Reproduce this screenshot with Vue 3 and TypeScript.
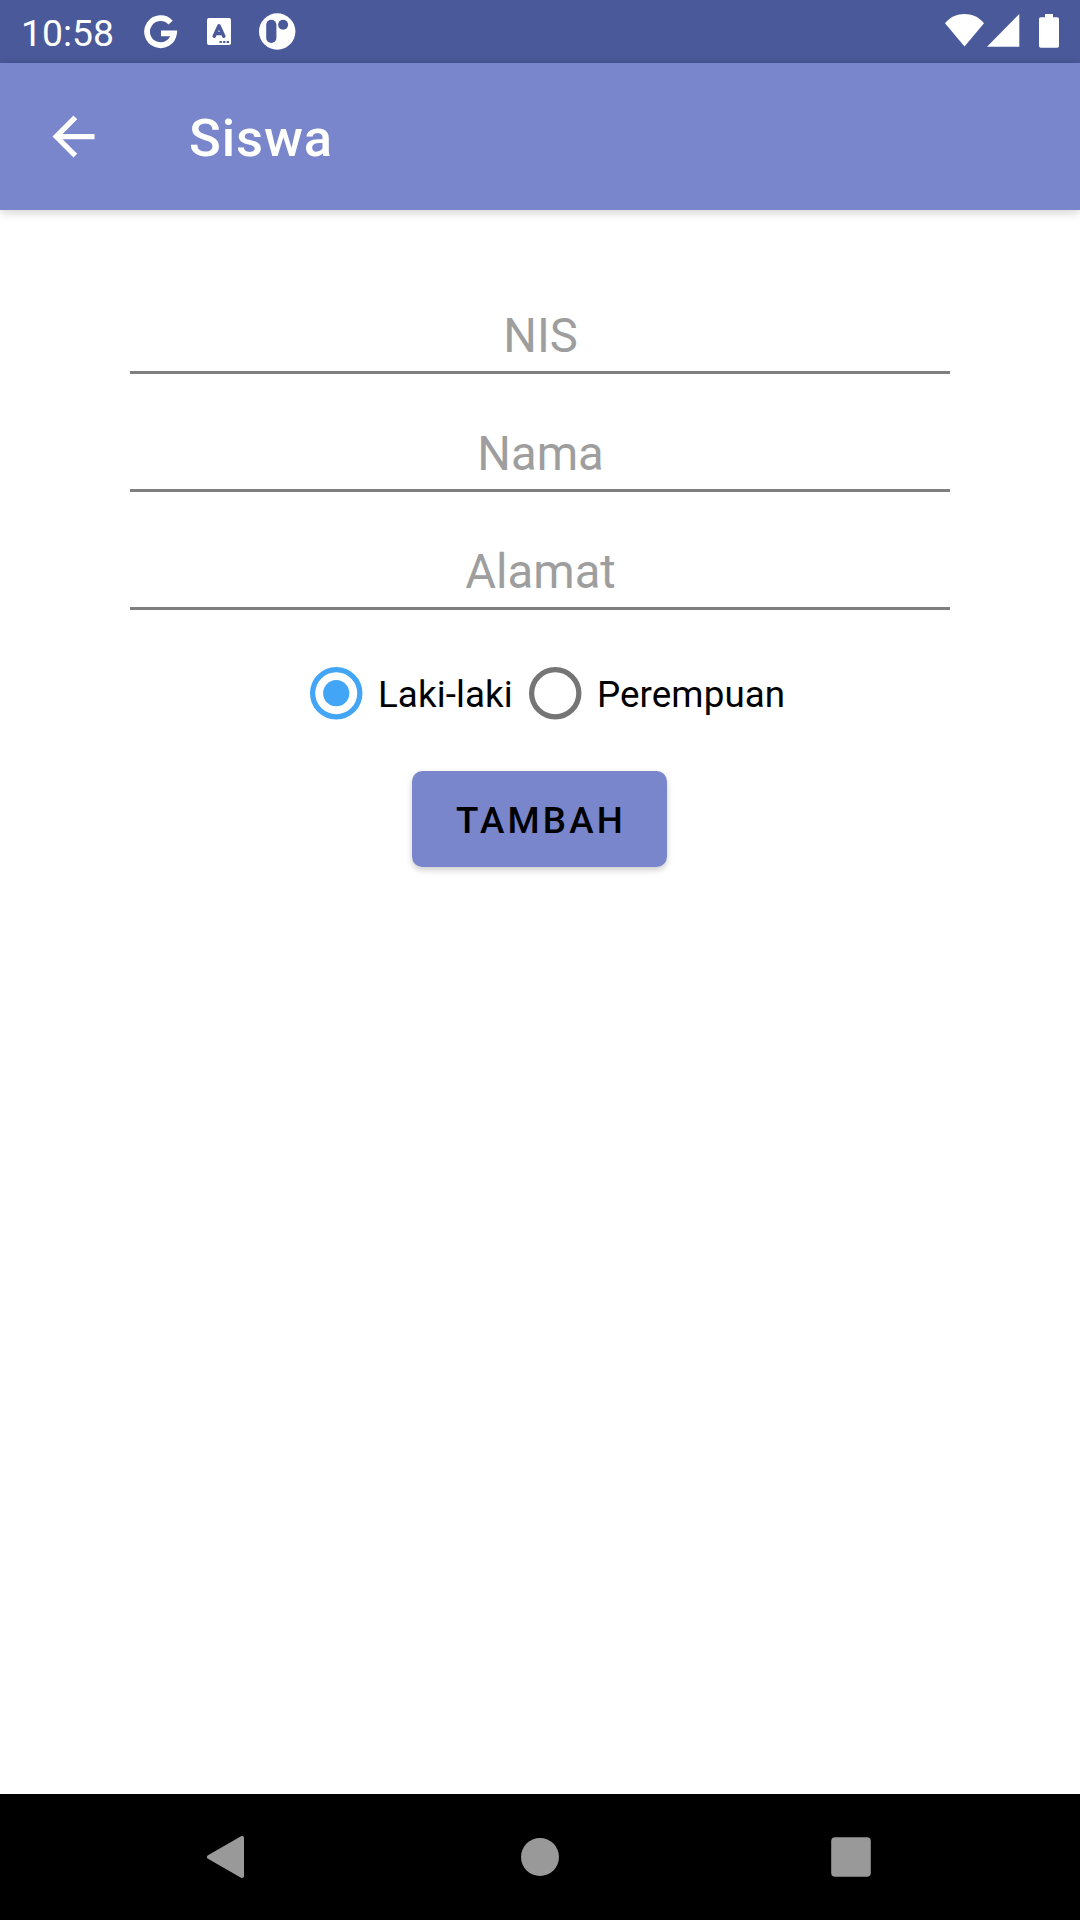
<script setup lang="ts">
import { ref } from 'vue'

const fields: string[] = ['NIS', 'Nama', 'Alamat']
const genders: string[] = ['Laki-laki', 'Perempuan']
const selected = ref<string>('Laki-laki')
</script>

<template>
  <div class="screen">
    <div class="status">
      <span class="clock">10:58</span>
      <svg class="google" width="34" height="34" viewBox="0 0 34 34">
        <path d="M26.6 7.6A13.5 13.5 0 1 0 30 18.3H17" fill="none" stroke="#fff" stroke-width="5.8" />
      </svg>
      <svg class="letter" width="24" height="27" viewBox="0 0 24 27">
        <path d="M2 0H22Q24 0 24 2V25Q24 27 22 27H2Q0 27 0 25V2Q0 0 2 0Z" fill="#fff" />
        <path d="M7.2 18.2L12 7.8L16.8 18.2M9 15.4H15" fill="none" stroke="#4a5999" stroke-width="3.5" stroke-linejoin="round" stroke-linecap="round" />
        <path d="M12.5 24H14.8M16.1 24H18.4M19.7 24H22" stroke="#4a5999" stroke-width="2.2" />
      </svg>
      <svg class="badge" width="37" height="37" viewBox="0 0 37 37">
        <circle cx="18.2" cy="18.5" r="18.2" fill="#fff" />
        <rect x="7.2" y="6.7" width="10.2" height="23.3" rx="5.1" fill="#4a5999" />
        <circle cx="24.1" cy="11.7" r="5" fill="#4a5999" />
      </svg>
      <span class="spacer"></span>
      <svg class="wifi" width="39" height="33" viewBox="0 0 39 33">
        <path d="M0 9.2C10 -3 29 -3 39 9.2L19.5 32.6Z" fill="#fff" />
      </svg>
      <svg class="signal" width="33" height="33" viewBox="0 0 33 33">
        <path d="M0 32.8L32.3 0V32.8Z" fill="#fff" />
      </svg>
      <svg class="battery" width="20" height="34" viewBox="0 0 20 34">
        <path d="M6 0H14V3.3H18.2Q20 3.3 20 5.1V32Q20 33.8 18.2 33.8H1.8Q0 33.8 0 32V5.1Q0 3.3 1.8 3.3H6Z" fill="#fff" />
      </svg>
    </div>

    <header class="appbar">
      <svg width="63" height="63" viewBox="0 0 24 24">
        <path d="M20 11H7.83l5.59-5.59L12 4l-8 8 8 8 1.41-1.41L7.83 13H20v-2z" fill="#fff" />
      </svg>
      <h1>Siswa</h1>
    </header>

    <main>
      <div class="fields">
        <div v-for="f in fields" :key="f" class="field">{{ f }}</div>
      </div>
      <div class="radios">
        <div v-for="g in genders" :key="g" class="radio" @click="selected = g">
          <svg width="63" height="63" viewBox="0 0 24 24" :class="{ on: selected === g }">
            <circle cx="11.9" cy="11.9" r="9" fill="none" stroke="currentColor" stroke-width="2" />
            <circle v-if="selected === g" cx="11.9" cy="11.9" r="5" fill="currentColor" />
          </svg>
          <span>{{ g }}</span>
        </div>
      </div>
      <button class="add">TAMBAH</button>
    </main>

    <nav>
      <svg class="back" width="37" height="42" viewBox="0 0 37 42">
        <path d="M2 21L35 2V40Z" fill="#999" stroke="#999" stroke-width="4" stroke-linejoin="round" />
      </svg>
      <svg class="home" width="38" height="38" viewBox="0 0 38 38">
        <circle cx="19" cy="19" r="19" fill="#999" />
      </svg>
      <svg class="recent" width="40" height="40" viewBox="0 0 40 40">
        <rect x="0.2" y="0.2" width="39.6" height="39.6" rx="4" fill="#999" />
      </svg>
    </nav>
  </div>
</template>

<style>
body {
  margin: 0;
}
</style>

<style scoped>
.screen {
  width: 1080px;
  height: 1920px;
  display: flex;
  flex-direction: column;
  background: #fff;
  font-family: Roboto, sans-serif;
  overflow: hidden;
}
svg {
  display: block;
  flex: none;
}
.status {
  height: 63px;
  flex: none;
  display: flex;
  align-items: flex-start;
  background: #4a5999;
  color: #fff;
}
.clock {
  width: 122px;
  padding-left: 21px;
  font-size: 37.3px;
  line-height: 66px;
}
.google {
  margin: 15px 0 0 1px;
}
.letter {
  margin: 18px 0 0 29px;
}
.badge {
  margin: 13px 0 0 27.5px;
}
.spacer {
  flex: 1;
}
.wifi {
  margin: 14px 3.5px 0 0;
}
.signal {
  margin: 14px 19px 0 0;
}
.battery {
  margin: 14px 21px 0 0;
}
.appbar {
  height: 147px;
  flex: none;
  display: flex;
  align-items: center;
  box-sizing: border-box;
  padding: 0 42px;
  background: #7986cb;
  box-shadow: 0 2px 10px rgba(0, 0, 0, 0.2);
}
h1 {
  margin: 2px 0 0 84px;
  font-size: 52.5px;
  line-height: 62px;
  font-weight: 500;
  letter-spacing: 0.9px;
  color: #fff;
}
main {
  flex: 1;
  display: flex;
  flex-direction: column;
  align-items: center;
}
.fields {
  display: flex;
  flex-direction: column;
  gap: 45px;
  width: 820px;
  margin-top: 91px;
}
.field {
  height: 70px;
  line-height: 70px;
  border-bottom: 3px solid #7f7f7f;
  text-align: center;
  text-indent: 1px;
  font-size: 47.25px;
  color: #9e9e9e;
}
.radios {
  display: flex;
  align-self: flex-start;
  margin: 51.5px 0 0 304.5px;
}
.radio {
  display: flex;
  align-items: center;
  height: 63px;
}
.radio svg {
  color: #757575;
}
.radio svg.on {
  color: #42a5f5;
}
.radio span {
  margin-left: 10.5px;
  width: 145.5px;
  white-space: nowrap;
  font-size: 36.75px;
  line-height: 44px;
  letter-spacing: 0.08px;
  padding-top: 4px;
  color: #000;
}
.add {
  width: 255px;
  height: 96px;
  margin: 46.5px 1px 0 0;
  padding: 3px 0 0 3px;
  border: none;
  border-radius: 10.5px;
  background: #7986cb;
  box-shadow: 0 3px 6px rgba(0, 0, 0, 0.2);
  font-family: inherit;
  font-size: 36.75px;
  font-weight: 500;
  letter-spacing: 3.2px;
  color: #000;
}
nav {
  height: 126px;
  flex: none;
  display: flex;
  align-items: center;
  background: #000;
}
.back {
  margin-left: 207px;
}
.home {
  margin-left: 277px;
}
.recent {
  margin-left: 272px;
}
</style>
